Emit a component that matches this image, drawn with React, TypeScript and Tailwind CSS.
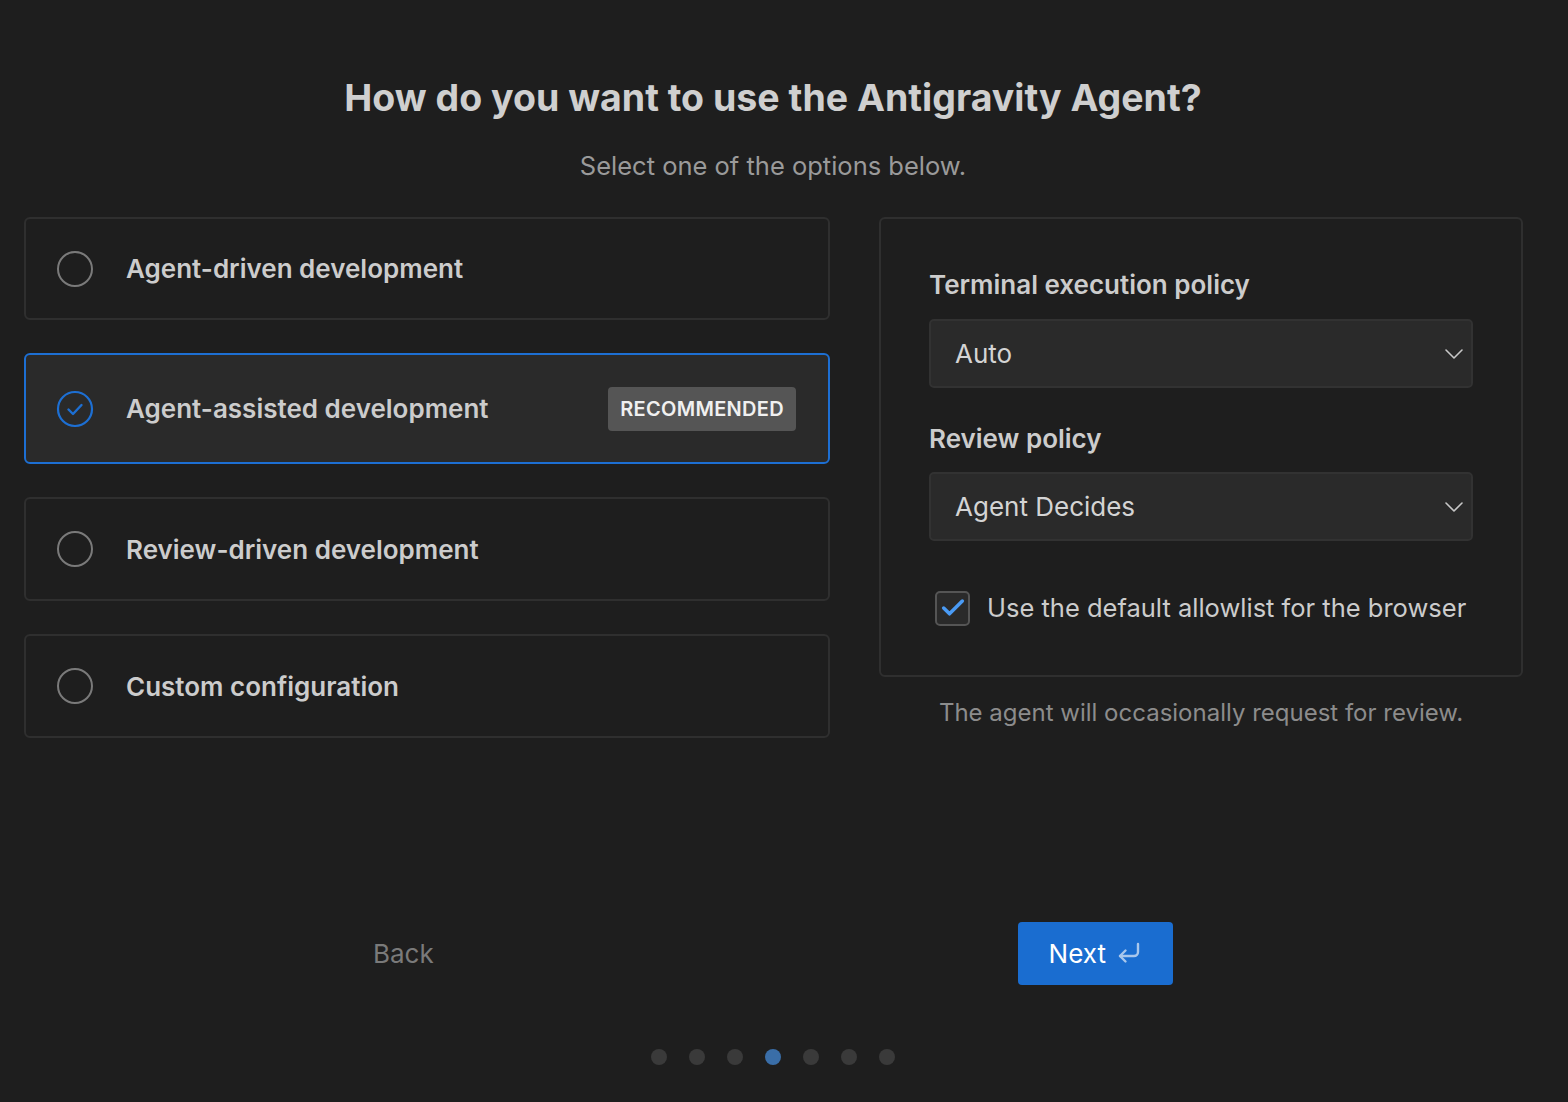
import { Check } from 'lucide-react';

const options = [
  { label: 'Agent-driven development', h: 'h-[103px]' },
  { label: 'Agent-assisted development', h: 'h-[111px]', selected: true, badge: 'RECOMMENDED' },
  { label: 'Review-driven development', h: 'h-[104px]' },
  { label: 'Custom configuration', h: 'h-[104px]' },
];

function Radio({ checked }: { checked?: boolean }) {
  if (checked) {
    return (
      <svg width="38" height="38" viewBox="0 0 38 38" className="shrink-0">
        <circle cx="19" cy="19" r="17" fill="none" stroke="#1d6fd3" strokeWidth="2.2" />
        <path d="M12.5 19.5l4.5 4.5 8.5-9" fill="none" stroke="#1d6fd3" strokeWidth="2.4" strokeLinecap="round" strokeLinejoin="round" />
      </svg>
    );
  }
  return (
    <svg width="38" height="38" viewBox="0 0 38 38" className="shrink-0">
      <circle cx="19" cy="19" r="17" fill="none" stroke="#7a7a7a" strokeWidth="2" />
    </svg>
  );
}

function Select({ value }: { value: string }) {
  return (
    <div className="flex h-[69px] w-[544px] items-center justify-between rounded-[5px] border-2 border-[#323232] bg-[#2a2a2a] pl-[24px] pr-[7px]">
      <span className="text-[26px] text-[#d4d4d4]">{value}</span>
      <svg width="20" height="12" viewBox="0 0 20 12">
        <path d="M2 2l8 8 8-8" fill="none" stroke="#c8c8c8" strokeWidth="1.6" strokeLinecap="round" strokeLinejoin="round" />
      </svg>
    </div>
  );
}

export default function App() {
  const dots = [0, 1, 2, 3, 4, 5, 6];
  return (
    <div
      className="flex h-[1102px] w-full flex-col bg-[#1e1e1e] pr-[22px] text-[#cccccc]"
      style={{ fontFamily: 'Inter, "Noto Sans", sans-serif' }}
    >
      <h1 className="mt-[76px] text-center text-[37.5px] font-bold leading-[44px] text-[#cfcfcf]">
        How do you want to use the Antigravity Agent?
      </h1>
      <p className="mt-[30px] text-center text-[25.5px] leading-[32px] text-[#9a9a9a]">
        Select one of the options below.
      </p>

      <div className="mt-[35px] flex items-start gap-[49px] pl-[24px]">
        <div className="flex w-[806px] flex-col gap-[33px]">
          {options.map((o) => (
            <div
              key={o.label}
              className={
                o.selected
                  ? `flex ${o.h} items-center rounded-[6px] border-2 border-[#1d6fd3] bg-[#2a2a2a] pl-[30px] pr-[32px]`
                  : `flex ${o.h} items-center rounded-[6px] border-2 border-[#2f2f2f] bg-[#1e1e1e] pl-[30px] pr-[32px]`
              }
            >
              <Radio checked={o.selected} />
              <span className="ml-[32px] text-[26px] font-semibold text-[#cccccc]">{o.label}</span>
              {o.badge && (
                <span className="ml-auto flex h-[44px] items-center rounded-[4px] bg-[#555555] px-[12px] text-[20px] font-semibold tracking-[0.3px] text-[#f0f0f0]">
                  {o.badge}
                </span>
              )}
            </div>
          ))}
        </div>

        <div className="flex w-[644px] flex-col">
          <div className="flex h-[460px] flex-col rounded-[6px] border-2 border-[#2f2f2f] pl-[48px] pt-[50px]">
            <label className="text-[26px] font-semibold leading-[32px] text-[#cccccc]">Terminal execution policy</label>
            <div className="mt-[18px]">
              <Select value="Auto" />
            </div>
            <label className="mt-[35px] text-[26px] font-semibold leading-[32px] text-[#cccccc]">Review policy</label>
            <div className="mt-[17px]">
              <Select value="Agent Decides" />
            </div>
            <div className="mt-[48px] flex items-center">
              <span className="ml-[6px] flex h-[35px] w-[35px] items-center justify-center rounded-[5px] border-2 border-[#555555] bg-[#2a2a2a]">
                <Check className="h-[28px] w-[28px] text-[#4a9bf5]" strokeWidth={3} />
              </span>
              <span className="ml-[17px] text-[25.5px] text-[#cccccc]">Use the default allowlist for the browser</span>
            </div>
          </div>
          <p className="mt-[20px] text-center text-[24px] leading-[32px] text-[#8c8c8c]">
            The agent will occasionally request for review.
          </p>
        </div>
      </div>

      <div className="mt-[184px] flex items-center">
        <button className="ml-[373px] text-[26px] text-[#7a7a7a]">Back</button>
        <button className="ml-[584px] flex h-[63px] w-[155px] items-center justify-center gap-[10px] rounded-[4px] bg-[#1a6dd0] text-[26px] text-white">
          Next
          <svg width="26" height="24" viewBox="0 0 26 24">
            <path d="M22 2v8a4 4 0 0 1-4 4H4" fill="none" stroke="#a9c7ec" strokeWidth="2.4" strokeLinecap="round" strokeLinejoin="round" />
            <path d="M9.5 8.5L4 14l5.5 5.5" fill="none" stroke="#a9c7ec" strokeWidth="2.4" strokeLinecap="round" strokeLinejoin="round" />
          </svg>
        </button>
      </div>

      <div className="mt-[64px] flex justify-center gap-[22px]">
        {dots.map((d) => (
          <span
            key={d}
            className={d === 3 ? 'h-[16px] w-[16px] rounded-full bg-[#3a6ea8]' : 'h-[16px] w-[16px] rounded-full bg-[#3a3a3a]'}
          />
        ))}
      </div>
    </div>
  );
}
